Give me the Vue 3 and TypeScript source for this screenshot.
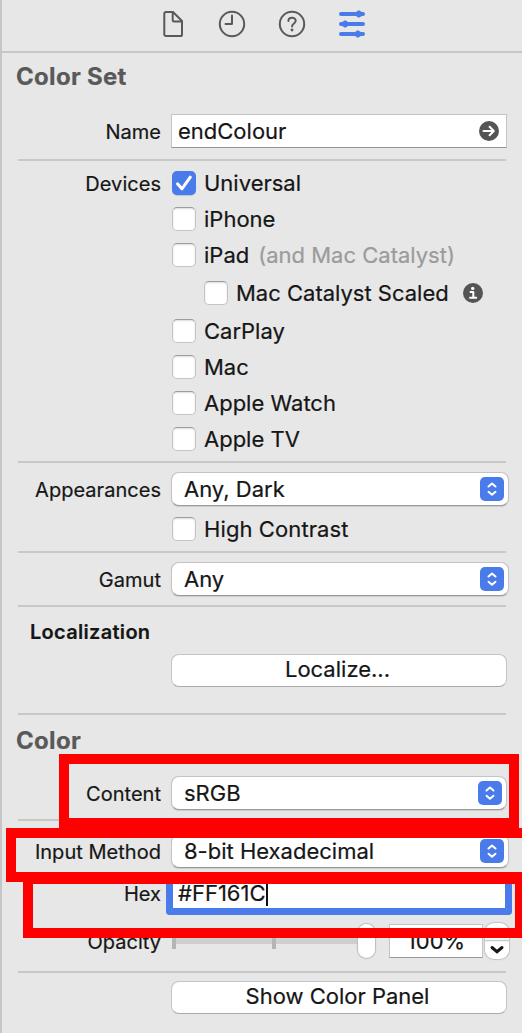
<script setup lang="ts">
interface Device {
  name: string
  checked?: boolean
  note?: string
  nested?: boolean
}

const devices: Device[] = [
  { name: 'Universal', checked: true },
  { name: 'iPhone' },
  { name: 'iPad', note: '(and Mac Catalyst)' },
  { name: 'Mac Catalyst Scaled', nested: true },
  { name: 'CarPlay' },
  { name: 'Mac' },
  { name: 'Apple Watch' },
  { name: 'Apple TV' },
]
</script>

<template>
  <main class="inspector">
    <nav class="tabs">
      <svg width="40" height="50" viewBox="0 0 40 50" class="line-icon">
        <path d="M14 12h7l9 9V34.400a1.700 1.700 0 0 1-1.700 1.700H14a1.700 1.700 0 0 1-1.700-1.700V13.700a1.700 1.700 0 0 1 1.700-1.700zM20.700 12v8a1.500 1.500 0 0 0 1.500 1.500H30" />
      </svg>
      <svg width="40" height="50" viewBox="0 0 40 50" class="line-icon">
        <circle cx="20" cy="24" r="12.2" /><path d="M20 15.500V24h-6.500" />
      </svg>
      <svg width="40" height="50" viewBox="0 0 40 50" class="line-icon">
        <circle cx="20" cy="24" r="12.2" />
        <path d="M16.400 21c0-4.400 7.300-4.400 7.300-.2 0 2.700-3.600 2.700-3.600 5.600" />
        <circle cx="20" cy="30" r="1.400" class="dot" />
      </svg>
      <svg width="40" height="50" viewBox="0 0 40 50" class="sliders">
        <path d="M9 14h22M9 24h22M9 34h22" />
        <path class="knobs" d="M23.500 12.500l2.500-2h1.500l3 2v3l-3 2H26l-2.500-2zM9.500 22.500l3-2H14l2.500 2v3l-2.500 2h-1.500l-3-2zM22.500 32.500l2.500-2h1.500l3 2v3l-3 2H25l-2.500-2z" />
      </svg>
    </nav>

    <h2 class="title">Color Set</h2>

    <div class="row name-row">
      <label>Name</label>
      <div class="field">
        <span>endColour</span>
        <svg width="20" height="20" viewBox="0 0 20 20">
          <circle cx="10" cy="10" r="10" fill="#555" />
          <path d="M4.500 10h10.200M10.600 5.800L14.800 10l-4.200 4.200" class="white-line" />
        </svg>
      </div>
    </div>

    <hr>

    <div class="row devices">
      <label>Devices</label>
      <div class="list">
        <div v-for="d in devices" :key="d.name" class="check-row" :class="{ nested: d.nested }">
          <span class="box" :class="{ checked: d.checked }">
            <svg v-if="d.checked" width="24" height="24" viewBox="0 0 24 24">
              <path d="M5.500 12.800l4.400 5L18.300 6.200" class="white-line tick" />
            </svg>
          </span>
          <span class="text">{{ d.name }}</span>
          <span v-if="d.note" class="note">{{ d.note }}</span>
          <svg v-if="d.nested" class="info" width="20" height="20" viewBox="0 0 20 20">
            <circle cx="10" cy="10" r="10" fill="#555" />
            <circle cx="9.700" cy="5.400" r="1.700" fill="#fff" />
            <path d="M7.500 8.900h2.800v5.600M7 14.800h6.200" class="white-line" />
          </svg>
        </div>
      </div>
    </div>

    <hr>

    <div class="row appearances">
      <label>Appearances</label>
      <div class="list">
        <div class="select">
          <span>Any, Dark</span>
          <i class="arrows"><svg width="24" height="24" viewBox="0 0 24 24"><path d="M8.500 9.500L12 6.500l3.500 3M8.500 14.800l3.500 3 3.500-3" class="white-line" /></svg></i>
        </div>
        <div class="check-row"><span class="box" /><span class="text contrast">High Contrast</span></div>
      </div>
    </div>

    <hr>

    <div class="row gamut">
      <label>Gamut</label>
      <div class="select">
        <span>Any</span>
        <i class="arrows"><svg width="24" height="24" viewBox="0 0 24 24"><path d="M8.500 9.500L12 6.500l3.500 3M8.500 14.800l3.500 3 3.500-3" class="white-line" /></svg></i>
      </div>
    </div>

    <hr>

    <h3 class="subtitle">Localization</h3>
    <button class="button localize">Localize...</button>

    <hr>

    <h2 class="title color">Color</h2>

    <div class="row content">
      <label>Content</label>
      <div class="select narrow">
        <span>sRGB</span>
        <i class="arrows"><svg width="24" height="24" viewBox="0 0 24 24"><path d="M8.500 9.500L12 6.500l3.500 3M8.500 14.800l3.500 3 3.500-3" class="white-line" /></svg></i>
      </div>
    </div>

    <hr>

    <div class="row method">
      <label>Input Method</label>
      <div class="select">
        <span>8-bit Hexadecimal</span>
        <i class="arrows"><svg width="24" height="24" viewBox="0 0 24 24"><path d="M8.500 9.500L12 6.500l3.500 3M8.500 14.800l3.500 3 3.500-3" class="white-line" /></svg></i>
      </div>
    </div>

    <div class="row hex">
      <label>Hex</label>
      <div class="field focused"><span>#FF161C</span><i class="caret" /></div>
    </div>

    <div class="row opacity">
      <label>Opacity</label>
      <div class="opacity-controls">
        <div class="slider"><i class="mark" /><i class="track" /><i class="mark" /><i class="track" /><i class="thumb" /></div>
        <div class="percent">100%</div>
        <div class="stepper">
          <svg width="24" height="36" viewBox="0 0 24 36">
            <path d="M0 17.500h24" stroke="#c8c8c8" stroke-width="1.500" />
            <path d="M7 11l5-4 5 4M7 24.500l5 4.200 5-4.200" class="chevron" />
          </svg>
        </div>
      </div>
    </div>

    <hr>

    <button class="button panel">Show Color Panel</button>

    <div class="mark-box first" />
    <div class="mark-box second" />
    <div class="mark-box third" />
  </main>
</template>

<style>
body { margin: 0; }
</style>

<style scoped>
* { box-sizing: border-box; }
.inspector {
  position: relative;
  width: 522px;
  height: 1033px;
  overflow: hidden;
  border-left: 2px solid #c6c6c6;
  background: #e7e7e7;
  color: #161616;
  font: 22px/24px Inter, "Liberation Sans", sans-serif;
  -webkit-text-stroke: 0.2px;
}
.tabs {
  height: 53px;
  border-bottom: 2px solid #c6c6c6;
  padding-left: 150px;
  display: flex;
  gap: 20px;
}
.line-icon { fill: none; stroke: #595959; stroke-width: 2; stroke-linejoin: round; stroke-linecap: round; }
.dot { fill: #595959; stroke: none; }
.sliders { stroke: #4a7bea; stroke-width: 4; stroke-linecap: round; fill: none; }
.sliders .knobs { fill: #4a7bea; stroke: none; }
.title { margin: 0; padding: 9px 0 0 14px; height: 61px; font-size: 24px; line-height: 30px; font-weight: 700; color: #595959; letter-spacing: 0.3px; }
hr { margin: 0 16px 0 16px; width: 488px; height: 2px; border: 0; background: #c8c8c8; }
.row { display: grid; grid-template-columns: 159px 338px; column-gap: 10px; align-items: start; }
label { text-align: right; font-size: 20px; line-height: 36px; letter-spacing: 0.03px; white-space: nowrap; }
.name-row { height: 45px; }
.field {
  display: flex;
  align-items: center;
  justify-content: space-between;
  width: 336px;
  height: 34px;
  padding: 0 7px 0 6px;
  background: #fff;
  border: 1px solid #c4c4c4;
  border-bottom-color: #959595;
}
.white-line { fill: none; stroke: #fff; stroke-width: 2; stroke-linecap: round; stroke-linejoin: round; }
.tick { stroke-width: 3; }
.devices { padding-top: 10px; height: 300px; }
.devices label { line-height: 26px; }
.check-row { display: flex; align-items: center; height: 24px; margin-bottom: 12px; white-space: nowrap; }
.devices .check-row { padding-left: 1px; }
.nested { margin: 14px 0 14px 32px; }
.box {
  width: 24px;
  height: 24px;
  margin-right: 8px;
  border: 1px solid #c4c4c4;
  border-top-color: #9c9c9c;
  border-radius: 5px;
  background: #fff;
  box-shadow: inset 0 1px 2px #ddd;
}
.box.checked { border: 0; background: #4a7bea; box-shadow: 0 1px 0 #bcc5df; }
.box svg { display: block; }
.note { margin-left: 9px; color: #9b9b9b; }
.info { margin-left: 14px; }
.contrast { letter-spacing: 0.1px; }
.appearances { padding-top: 9px; height: 88px; }
.appearances .check-row { margin-top: 11px; padding-left: 1px; }
.select {
  display: flex;
  align-items: center;
  justify-content: space-between;
  width: 338px;
  height: 34px;
  padding: 0 4px 0 12px;
  background: #fff;
  border: 1px solid #c4c4c4;
  border-bottom-color: #999;
  border-radius: 8px;
  box-shadow: 0 1px 1px #ccc;
}
.select.narrow { width: 336px; }
.arrows { width: 24px; height: 24px; border-radius: 5px; background: #4a7bea; }
.arrows svg { display: block; }
.gamut { padding-top: 9px; height: 52px; }
.subtitle { margin: 0; height: 47px; padding: 13px 0 0 28px; font-size: 20px; line-height: 24px; font-weight: 600; letter-spacing: 0.3px; }
.button {
  display: block;
  width: 336px;
  height: 33px;
  margin: 0 0 0 169px;
  padding: 0 3px 4px 0;
  border: 1px solid #c4c4c4;
  border-bottom-color: #aaa;
  border-radius: 8px;
  background: #fff;
  color: inherit;
  font: inherit;
}
.localize { margin-bottom: 26px; }
.title.color { padding-top: 11px; }
.content { height: 43px; }
.method { padding-top: 13px; height: 56px; }
.hex label { line-height: 34px; }
.hex { height: 46px; }
.field.focused {
  justify-content: flex-start;
  height: 33px;
  border: 0;
  border-radius: 1px;
  padding-left: 7px;
  padding-bottom: 1px;
  box-shadow: 0 0 0 5px #4a7bea, inset 0 0 0 2px #4a7bea;
}
.caret { width: 2px; height: 26px; background: #111; }
.opacity { height: 48px; }
.opacity label { line-height: 38px; }
.opacity-controls { display: flex; height: 36px; align-items: center; }
.slider { width: 204px; height: 34px; display: flex; align-items: center; padding-left: 1px; }
.track { width: 96px; height: 6px; background: #cfcfcf; }
.mark { width: 4px; height: 15px; background: #b5b5b5; }
.track:nth-child(4) { width: 82px; }
.thumb { width: 17px; height: 34px; background: #fff; border-radius: 9px; box-shadow: 0 0 1px 1px #bbb; }
.percent { width: 94px; height: 34px; margin-left: 14px; padding-right: 0; text-align: center; line-height: 33px; background: #fff; border: 1px solid #c4c4c4; border-bottom-color: #999; }
.stepper { width: 24px; height: 36px; margin-left: 2px; background: #fff; border-radius: 9px; box-shadow: 0 0 1px 1px #c2c2c2; }
.stepper svg { display: block; }
.chevron { fill: none; stroke: #161616; stroke-width: 3; stroke-linecap: round; }
.panel { margin-top: 8px; }
.mark-box { position: absolute; border: 10px solid #f00; }
.first { left: 57px; top: 754px; width: 460px; height: 74px; }
.second { left: 4px; top: 828px; width: 530px; height: 54px; }
.third { left: 21px; top: 874px; width: 502px; height: 64px; }
</style>
